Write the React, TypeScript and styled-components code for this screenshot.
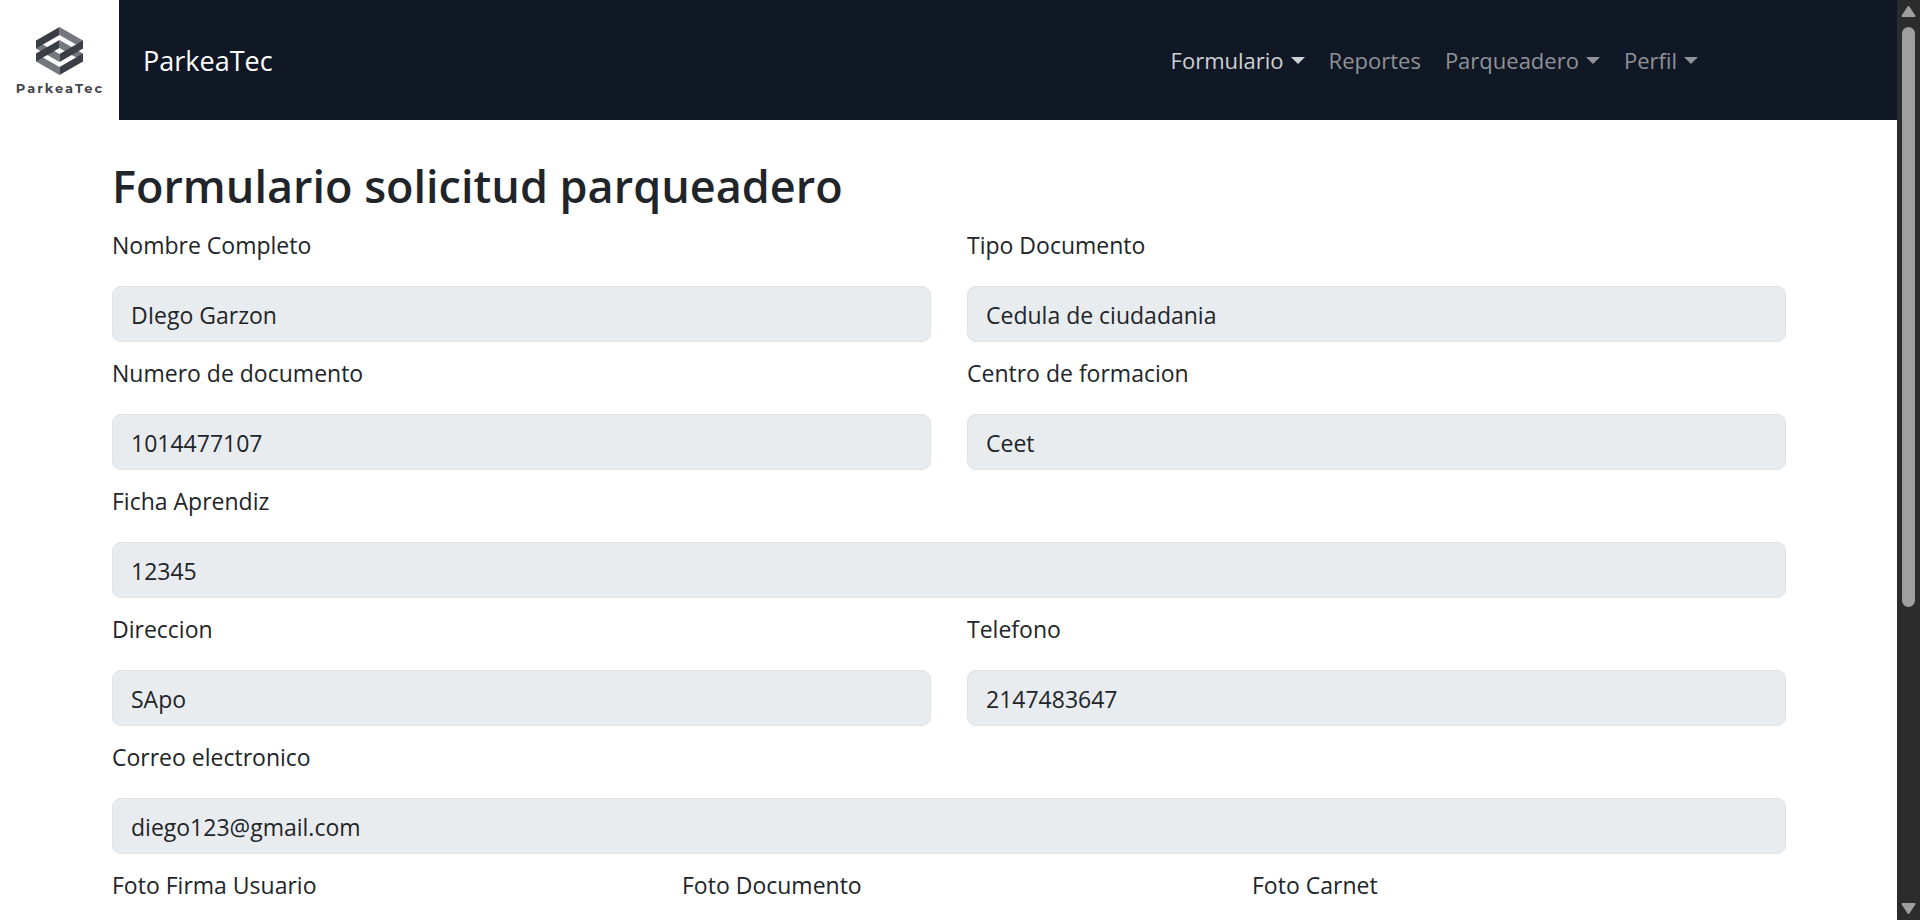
import React, { useId } from "react";
import styled, { createGlobalStyle } from "styled-components";

const GlobalStyle = createGlobalStyle`
  *, *::before, *::after { box-sizing: border-box; }
  body {
    margin: 0;
    background: #fff;
    color: #212529;
    font-family: "Segoe UI", "Open Sans", "Noto Sans", sans-serif;
    font-size: 23px;
    line-height: 36px;
  }
`;

const Window = styled.div`
  display: flex;
  height: 100vh;
`;

const Page = styled.div`
  flex: 1;
  min-width: 0;
  overflow-y: auto;
  scrollbar-width: none;
`;

const Navbar = styled.header`
  display: flex;
  align-items: center;
  height: 120px;
  padding-right: 187px;
  background: #101725;
`;

const LogoLink = styled.a`
  display: block;
  width: 119px;
  height: 120px;
  background: #fff;
`;

const Brand = styled.a`
  margin-left: 24px;
  padding-top: 2px;
  color: #fff;
  font-size: 27px;
  text-decoration: none;
`;

const Nav = styled.nav`
  margin-left: auto;
  font-size: 22px;
`;

const NavList = styled.ul`
  display: flex;
  margin: 0;
  padding: 0;
  list-style: none;
`;

const NavLink = styled.a<{ $active?: boolean; $menu?: boolean }>`
  display: flex;
  align-items: center;
  gap: 7px;
  padding: 0 12px;
  color: ${(p) => (p.$active ? "#cfd1d3" : "#8f9297")};
  text-decoration: none;

  &::after {
    content: ${(p) => (p.$menu ? '""' : "none")};
    border: 7px solid transparent;
    border-top-color: currentColor;
    border-bottom: 0;
  }
`;

const Main = styled.main`
  padding: 37px 111px 0 112px;
`;

const Title = styled.h2`
  margin: 0 0 12px;
  font-size: 45px;
  font-weight: 600;
  line-height: 58px;
`;

const Row = styled.div`
  display: flex;
  gap: 36px;
  margin-bottom: 13px;
`;

const Column = styled.div`
  flex: 1;
  min-width: 0;
`;

const Label = styled.label`
  display: block;
  margin-bottom: 23px;
`;

const Input = styled.input`
  display: block;
  width: 100%;
  height: 56px;
  padding: 2px 18px 0;
  border: 1px solid #dee2e6;
  border-radius: 9px;
  background: #e9ecef;
  color: inherit;
  font: inherit;
`;

const PhotoTitle = styled.p`
  margin: 0;
`;

const ScrollBar = styled.div`
  display: flex;
  flex-direction: column;
  align-items: center;
  width: 23px;
  background: #2c2c2c;
`;

const ScrollTrack = styled.div`
  flex: 1;
  width: 13px;
`;

const ScrollThumb = styled.div`
  height: 67%;
  border-radius: 7px;
  background: #9f9f9f;
`;

const Arrow = styled.svg<{ $down?: boolean }>`
  display: block;
  width: 23px;
  height: 27px;
  fill: #9f9f9f;
  stroke: #9f9f9f;
  transform: ${(p) => (p.$down ? "rotate(180deg)" : "none")};
`;

const LogoText = styled.text`
  font: 700 13px "Montserrat", "Open Sans", sans-serif;
  letter-spacing: 2px;
  fill: #45484f;
`;

function Logo() {
  return (
    <svg width="119" height="120" viewBox="0 0 119 120" role="img" aria-label="ParkeaTec">
      <g fill="#75777c">
        <path d="M59.5 27 83 40.5v8L59.5 35z" />
        <path d="M36 40.5 59.5 54v8L36 48.5z" />
        <path d="M59.5 40 83 53.5v8L59.5 48z" />
        <path d="M36 53.5 59.5 67v8L36 61.5z" />
      </g>
      <g fill="#3b3e47">
        <path d="M59.5 27 36 40.5v8L59.5 35z" />
        <path d="M83 40.5 59.5 54v8L83 48.5z" />
        <path d="M59.5 40 36 53.5v8L59.5 48z" />
        <path d="M83 53.5 59.5 67v8L83 61.5z" />
      </g>
      <LogoText x="60" y="93" textAnchor="middle">ParkeaTec</LogoText>
    </svg>
  );
}

function Field({ label, value, type = "text" }: { label: string; value: string; type?: string }) {
  const id = useId();
  return (
    <Column>
      <Label htmlFor={id}>{label}</Label>
      <Input id={id} type={type} value={value} readOnly />
    </Column>
  );
}

const navItems = [
  { text: "Formulario", menu: true, active: true },
  { text: "Reportes" },
  { text: "Parqueadero", menu: true },
  { text: "Perfil", menu: true },
];

const rows = [
  [{ label: "Nombre Completo", value: "DIego Garzon" }, { label: "Tipo Documento", value: "Cedula de ciudadania" }],
  [{ label: "Numero de documento", value: "1014477107" }, { label: "Centro de formacion", value: "Ceet" }],
  [{ label: "Ficha Aprendiz", value: "12345" }],
  [{ label: "Direccion", value: "SApo" }, { label: "Telefono", value: "2147483647", type: "tel" }],
  [{ label: "Correo electronico", value: "diego123@gmail.com", type: "email" }],
];

const photos = ["Foto Firma Usuario", "Foto Documento", "Foto Carnet"];

export default function App() {
  return (
    <Window>
      <GlobalStyle />
      <Page>
        <Navbar>
          <LogoLink href="#"><Logo /></LogoLink>
          <Brand href="#">ParkeaTec</Brand>
          <Nav>
            <NavList>
              {navItems.map((item) => (
                <li key={item.text}>
                  <NavLink href="#" $menu={item.menu} $active={item.active}>{item.text}</NavLink>
                </li>
              ))}
            </NavList>
          </Nav>
        </Navbar>
        <Main>
          <Title>Formulario solicitud parqueadero</Title>
          <form>
            {rows.map((row) => (
              <Row key={row[0].label}>
                {row.map((field) => <Field key={field.label} {...field} />)}
              </Row>
            ))}
            <Row>
              {photos.map((photo) => (
                <Column key={photo}><PhotoTitle>{photo}</PhotoTitle></Column>
              ))}
            </Row>
          </form>
        </Main>
      </Page>
      <ScrollBar aria-hidden="true">
        <Arrow viewBox="0 0 23 27"><path d="M11.5 7 17.5 16h-12z" strokeWidth="2" strokeLinejoin="round" /></Arrow>
        <ScrollTrack><ScrollThumb /></ScrollTrack>
        <Arrow $down viewBox="0 0 23 27"><path d="M11.5 7 17.5 16h-12z" strokeWidth="2" strokeLinejoin="round" /></Arrow>
      </ScrollBar>
    </Window>
  );
}
